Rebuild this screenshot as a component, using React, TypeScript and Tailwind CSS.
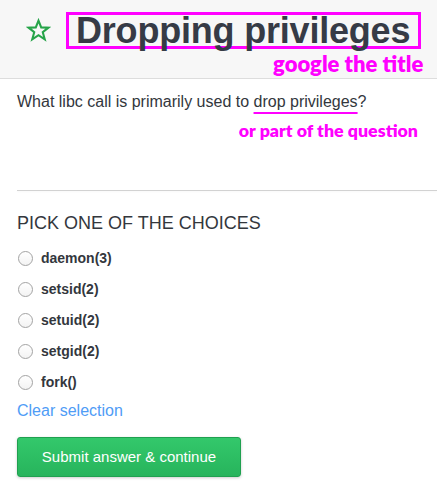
import { useState } from 'react';

const choices = ['daemon(3)', 'setsid(2)', 'setuid(2)', 'setgid(2)', 'fork()'];

function Star() {
  return (
    <svg width="25" height="25" viewBox="0 0 24 24" className="shrink-0">
      <polygon
        points="12,2.5 14.6,9 21.5,9.3 16.1,13.6 18,20.4 12,16.5 6,20.4 7.9,13.6 2.5,9.3 9.4,9"
        fill="none"
        stroke="#26a449"
        strokeWidth="2"
        strokeLinejoin="miter"
      />
    </svg>
  );
}

export default function App() {
  const [picked, setPicked] = useState<number | null>(null);

  return (
    <div className="w-[437px] h-[486px] bg-white overflow-hidden font-['Liberation_Sans',Arial,sans-serif] text-[#33373d]">
      {/* header */}
      <div className="h-[79px] bg-[#f7f7f7] border-b border-[#dddddd] flex items-start pt-[12px]">
        <div className="ml-[26px] mt-[6px]">
          <Star />
        </div>
        <div className="ml-[15px] flex flex-col items-end">
          <div className="h-[37px] border-[3px] border-[#ff00ff] pl-[7px] pr-[8px] flex items-center">
            <h1 className="text-[36px] leading-none font-bold text-[#363b46] tracking-[-0.2px] mt-[1px]">
              Dropping privileges
            </h1>
          </div>
          <div className="mt-[3px] mr-[-2px] font-['Lato',sans-serif] font-extrabold text-[22px] leading-[24px] text-[#ff00ff]">
            google the title
          </div>
        </div>
      </div>

      {/* question */}
      <div className="px-[17px] pt-[13px]">
        <p className="text-[16px] leading-[20px]">
          What libc call is primarily used to{' '}
          <span className="underline decoration-[#ff00ff] decoration-2 underline-offset-[5px]">
            drop privileges
          </span>
          ?
        </p>
        <div className="text-right pr-[2px] mt-[8px] font-['Lato',sans-serif] font-extrabold text-[17.8px] leading-[20px] text-[#ff00ff]">
          or part of the question
        </div>
      </div>

      <div className="ml-[17px] mt-[50px] border-t border-[#d2d2d2] shadow-[0_1px_2px_rgba(0,0,0,0.04)]" />

      {/* choices */}
      <div className="px-[17px] pt-[21px]">
        <h2 className="text-[18px] leading-[22px] text-[#33373d] uppercase">Pick one of the choices</h2>
        <div className="mt-[16px] flex flex-col gap-[14px]">
          {choices.map((c, i) => (
            <label
              key={c}
              onClick={() => setPicked(i)}
              className="flex items-center gap-[8px] h-[17px] cursor-pointer"
            >
              <span className="ml-[1px] w-[15px] h-[15px] rounded-full border border-[#a3a3a3] bg-gradient-to-b from-white to-[#f3f3f3] flex items-center justify-center">
                {picked === i && <span className="w-[7px] h-[7px] rounded-full bg-[#333]" />}
              </span>
              <span className="text-[14px] font-bold text-[#33373d]">{c}</span>
            </label>
          ))}
        </div>
        <button
          onClick={() => setPicked(null)}
          className="block mt-[10px] text-[16px] leading-[20px] text-[#4f9cf6]"
        >
          Clear selection
        </button>
        <button className="mt-[16px] w-[224px] h-[40px] rounded-[3px] border border-[#20a050] bg-gradient-to-b from-[#33c86b] to-[#27b45c] text-white text-[15px] shadow-[0_1px_3px_rgba(0,0,0,0.2)]">
          Submit answer &amp; continue
        </button>
      </div>
    </div>
  );
}
